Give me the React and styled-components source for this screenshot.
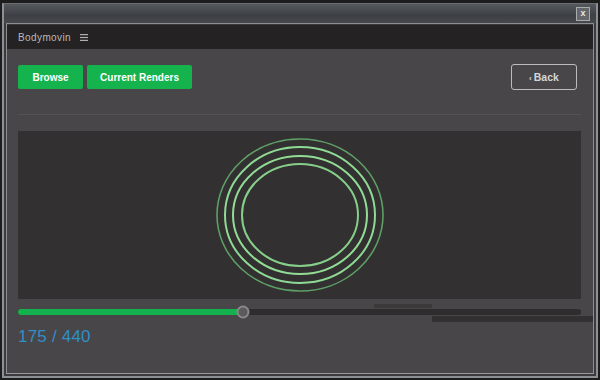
import React from "react";
import styled, { createGlobalStyle } from "styled-components";

const GlobalStyle = createGlobalStyle`
  body {
    margin: 0;
    background: #1b1b1c;
    font-family: "Liberation Sans", Arial, sans-serif;
  }
`;

const Frame = styled.div`
  width: 600px;
  height: 380px;
  box-sizing: border-box;
  padding: 3px 2px 2px 2px;
  background: #1d1d1e;
  display: flex;
  flex-direction: column;
  overflow: hidden;
`;

const TitleBar = styled.div`
  height: 20px;
  flex-shrink: 0;
  display: flex;
  justify-content: flex-end;
  align-items: center;
  padding-right: 6px;
  background: linear-gradient(#55585d, #3d4044 60%, #45484c);
  border-top: 1px solid #6a6d71;
  border-left: 2px solid #8c8f93;
  border-right: 2px solid #8c8f93;
  box-sizing: border-box;
`;

const CloseButton = styled.div`
  width: 14px;
  height: 14px;
  box-sizing: border-box;
  border: 1px solid #a9abae;
  background: #63666a;
  color: #e6e6e6;
  font-size: 9px;
  line-height: 11px;
  text-align: center;
  font-weight: bold;
`;

const Window = styled.div`
  flex: 1;
  display: flex;
  flex-direction: column;
  background: #3b3b3d;
  border-left: 2px solid #8c8f93;
  border-right: 2px solid #8c8f93;
  border-bottom: 2px solid #8c8f93;
  padding: 0 2px 2px 2px;
`;

const Panel = styled.div`
  flex: 1;
  display: flex;
  flex-direction: column;
  background: #484648;
  border: 1px solid #8d8d8f;
  border-bottom-color: #9a9a9c;
`;

const PanelHeader = styled.div`
  height: 24px;
  flex-shrink: 0;
  display: flex;
  align-items: center;
  gap: 9px;
  padding-left: 11px;
  background: #252223;
  border-top: 1px solid #3a3839;
`;

const PanelTitle = styled.span`
  color: #b9b8b8;
  font-size: 10px;
  letter-spacing: 0.4px;
`;

const Content = styled.div`
  flex: 1;
  display: flex;
  flex-direction: column;
  padding: 15px 12px 0 11px;
`;

const Toolbar = styled.div`
  display: flex;
  align-items: center;
  gap: 4px;
  padding-right: 4px;
  padding-bottom: 24px;
  border-bottom: 1px solid #545254;
`;

const GreenButton = styled.button`
  height: 24px;
  width: ${(p) => p.$w}px;
  border: none;
  border-radius: 2px;
  background: #14b34d;
  color: #ffffff;
  font-family: "Liberation Sans", Arial, sans-serif;
  font-size: 10px;
  font-weight: bold;
  padding: 0;
`;

const OutlineButton = styled.button`
  margin-left: auto;
  height: 26px;
  width: 66px;
  border: 1px solid #bdbcbd;
  border-radius: 3px;
  background: transparent;
  color: #d6d5d6;
  font-family: "Liberation Sans", Arial, sans-serif;
  font-size: 10.5px;
  font-weight: bold;
  padding: 0;

  span {
    font-size: 8px;
    margin-right: 2px;
  }
`;

const Stage = styled.div`
  margin-top: 16px;
  height: 168px;
  background: #323031;
  display: flex;
  align-items: center;
  justify-content: center;
`;

const SliderRow = styled.div`
  position: relative;
  height: 12px;
  margin-top: 7px;
  display: flex;
  align-items: center;
`;

const Track = styled.div`
  flex: 1;
  height: 6px;
  border-radius: 3px;
  background: #2e2c2d;
  position: relative;
`;

const Fill = styled.div`
  height: 100%;
  border-radius: 3px;
  background: #13b24e;
`;

const Thumb = styled.div`
  position: absolute;
  top: 50%;
  width: 13px;
  height: 13px;
  box-sizing: border-box;
  border-radius: 50%;
  border: 2px solid #8a898a;
  background: #5c5b5c;
  transform: translate(-50%, -50%);
`;

const Glitch = styled.div`
  position: absolute;
  background: ${(p) => p.$c};
`;

const Counter = styled.div`
  margin-top: 9px;
  color: #2f8fc7;
  font-size: 17px;
  letter-spacing: 0.2px;
`;

const Menu = () => (
  <svg width="8" height="7" viewBox="0 0 8 7">
    <rect x="0" y="0" width="8" height="1.2" fill="#b0b0b0" />
    <rect x="0" y="2.9" width="8" height="1.2" fill="#b0b0b0" />
    <rect x="0" y="5.8" width="8" height="1.2" fill="#b0b0b0" />
  </svg>
);

const rings = [
  { rx: 83, ry: 76, c: "#5e9f66", w: 1.6 },
  { rx: 75, ry: 68, c: "#8ed993", w: 2 },
  { rx: 67, ry: 59, c: "#92dc95", w: 2 },
  { rx: 58, ry: 51, c: "#86cf8b", w: 2 },
];

const Rings = () => (
  <svg width="180" height="164" viewBox="-90 -82 180 164">
    {rings.map((r, i) => (
      <ellipse key={i} cx="0" cy="0" rx={r.rx} ry={r.ry} fill="none" stroke={r.c} strokeWidth={r.w} />
    ))}
  </svg>
);

export default function App() {
  const frame = 175;
  const total = 440;
  const pct = 40;

  return (
    <>
      <GlobalStyle />
      <Frame>
        <TitleBar>
          <CloseButton>x</CloseButton>
        </TitleBar>
        <Window>
          <Panel>
            <PanelHeader>
              <PanelTitle>Bodymovin</PanelTitle>
              <Menu />
            </PanelHeader>
            <Content>
              <Toolbar>
                <GreenButton $w={65}>Browse</GreenButton>
                <GreenButton $w={105}>Current Renders</GreenButton>
                <OutlineButton>
                  <span>‹</span>Back
                </OutlineButton>
              </Toolbar>
              <Stage>
                <Rings />
              </Stage>
              <SliderRow>
                <Glitch $c="#3b393a" style={{ left: 356, width: 58, top: -2, height: 4 }} />
                <Track>
                  <Fill style={{ width: `${pct}%` }} />
                  <Thumb style={{ left: `${pct}%` }} />
                </Track>
                <Glitch $c="#323031" style={{ left: 414, right: -12, top: 10, height: 6 }} />
              </SliderRow>
              <Counter>
                {frame} / {total}
              </Counter>
            </Content>
          </Panel>
        </Window>
      </Frame>
    </>
  );
}
